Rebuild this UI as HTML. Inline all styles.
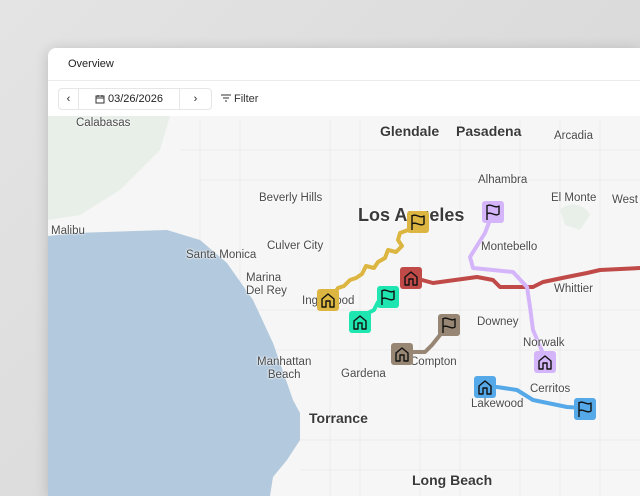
<!DOCTYPE html>
<html><head><meta charset="utf-8"><style>
*{margin:0;padding:0;box-sizing:border-box}
html,body{width:640px;height:496px;overflow:hidden}
body{background:linear-gradient(135deg,#e4e4e4,#d4d4d4);font-family:"Liberation Sans",sans-serif;position:relative}
.win{position:absolute;left:48px;top:48px;width:592px;height:448px;background:#fff;border-radius:8px 0 0 0;box-shadow:0 2px 14px rgba(0,0,0,.18);overflow:hidden}
.hdr{position:absolute;left:0;top:0;right:0;height:33px;border-bottom:1px solid #ececec;font-size:11px;color:#222;padding:10px 0 0 20px}
.tb{position:absolute;left:0;top:33px;right:0;height:35px;background:#fff}
.grp{position:absolute;left:10px;top:7px;width:154px;height:22px;border:1px solid #e6e6e6;border-radius:4px;display:flex;font-size:11px;color:#222}
.grp div{display:flex;align-items:center;justify-content:center}
.map{position:absolute;left:0;top:68px;right:0;bottom:0;background:#f6f6f6}
.l{position:absolute;font-size:11.5px;color:#4a4a4a;white-space:nowrap;text-shadow:0 0 2px #fff,0 0 2px #fff}
.b{font-weight:bold;font-size:14px;color:#3a3a3a}
</style></head><body>
<div class="win">
<div class="hdr">Overview</div>
<div class="tb">
<div class="grp"><div style="width:20px;border-right:1px solid #e6e6e6">‹</div><div style="width:101px;border-right:1px solid #e6e6e6"><svg width="10" height="10" viewBox="0 0 10 10" style="margin-right:3px"><rect x="1" y="2" width="8" height="7" fill="none" stroke="#333"/><path d="M1 4h8M3 1v2M7 1v2" stroke="#333"/></svg>03/26/2026</div><div style="flex:1">›</div></div>
<div style="position:absolute;left:173px;top:12px;font-size:11px;color:#333"><svg width="10" height="8" viewBox="0 0 10 8" style="margin-right:3px"><path d="M0 1h10M2 4h6M4 7h2" stroke="#333"/></svg>Filter</div>
</div>
<div class="map"></div>
</div>
<svg width="640" height="496" style="position:absolute;left:0;top:0">
<defs><clipPath id="c"><rect x="48" y="116" width="592" height="380"/></clipPath></defs>
<g clip-path="url(#c)">
<g stroke="#ececec" stroke-width="1" fill="none">
<path d="M200 120V496M240 120V496M330 120V496M360 120V496M420 120V496M460 120V496M520 120V496M560 120V496M600 120V496M180 150H640M200 180H640M250 310H640M260 350H640M280 440H640M300 470H640"/>
</g>
<path d="M48 116H170L160 150L120 190L80 215L48 220Z" fill="#e8efe8"/>
<path d="M560 210C570 200 585 205 590 215L580 230L565 225Z" fill="#e8efe8"/>
<path d="M48 236L75 233L167 230L200 240L227 263L253 300L273 343L293 400L300 413L300 440L287 460L273 477L270 496H48Z" fill="#b3c9dd"/>
<g fill="none" stroke-width="4" stroke-linecap="round" stroke-linejoin="round">
<path d="M422 280L433 283L477 277L493 280L500 287L533 287L543 282L567 277L587 273L600 270L640 268" stroke="#bf4a48"/>
<path d="M493 212L485 233L470 257L473 268L513 272L527 287L530 307L533 330L545 358" stroke="#d5b5fa"/>
<path d="M485 387L497 387L517 390L533 400L567 407L585 408" stroke="#55a9e8"/>
<path d="M418 222L408 230L400 233L398 240L402 246L396 252L388 250L385 258L378 262L374 268L366 266L362 274L356 278L350 280L344 286L338 288L334 294L328 300" stroke="#dcb640"/>
<path d="M388 297L378 302L374 310L366 314L360 322" stroke="#1fe5b0"/>
<path d="M449 325L440 335L432 345L425 352L415 352L402 353" stroke="#978673"/>
</g>
</g>
</svg>
<div class="l" style="left:76px;top:117px">Calabasas</div>
<div class="l b" style="left:380px;top:123px">Glendale</div>
<div class="l b" style="left:456px;top:123px">Pasadena</div>
<div class="l" style="left:554px;top:130px">Arcadia</div>
<div class="l" style="left:478px;top:174px">Alhambra</div>
<div class="l" style="left:551px;top:192px">El Monte</div>
<div class="l" style="left:612px;top:194px">West</div>
<div class="l" style="left:259px;top:192px">Beverly Hills</div>
<div class="l b" style="left:358px;top:205px;font-size:18px">Los Angeles</div>
<div class="l" style="left:51px;top:225px">Malibu</div>
<div class="l" style="left:267px;top:240px">Culver City</div>
<div class="l" style="left:481px;top:241px">Montebello</div>
<div class="l" style="left:186px;top:249px">Santa Monica</div>
<div class="l" style="left:246px;top:272px;line-height:13px">Marina<br>Del Rey</div>
<div class="l" style="left:554px;top:283px">Whittier</div>
<div class="l" style="left:302px;top:295px">Inglewood</div>
<div class="l" style="left:477px;top:316px">Downey</div>
<div class="l" style="left:523px;top:337px">Norwalk</div>
<div class="l" style="left:257px;top:356px;line-height:13px;text-align:center">Manhattan<br>Beach</div>
<div class="l" style="left:341px;top:368px">Gardena</div>
<div class="l" style="left:410px;top:356px">Compton</div>
<div class="l" style="left:530px;top:383px">Cerritos</div>
<div class="l" style="left:471px;top:398px">Lakewood</div>
<div class="l b" style="left:309px;top:410px">Torrance</div>
<div class="l b" style="left:412px;top:472px">Long Beach</div>
<svg width="640" height="496" style="position:absolute;left:0;top:0">
<defs>
<g id="h"><path d="M-6 7V-1L0-6L6-1V7H2V1H-2V7Z" fill="none" stroke="#111" stroke-width="1.4" stroke-linejoin="round"/></g>
<g id="f"><path d="M-6 8V-7M-6-6C-2-9 2-3 6-6V2C2 5-2-1-6 2" fill="none" stroke="#111" stroke-width="1.4" stroke-linejoin="round"/></g>
</defs>
<g transform="translate(418,222)"><rect x="-11" y="-11" width="22" height="22" rx="3" fill="#dcb640"/><use href="#f"/></g>
<g transform="translate(328,300)"><rect x="-11" y="-11" width="22" height="22" rx="3" fill="#dcb640"/><use href="#h"/></g>
<g transform="translate(411,278)"><rect x="-11" y="-11" width="22" height="22" rx="3" fill="#bf4a48"/><use href="#h"/></g>
<g transform="translate(388,297)"><rect x="-11" y="-11" width="22" height="22" rx="3" fill="#1fe5b0"/><use href="#f"/></g>
<g transform="translate(360,322)"><rect x="-11" y="-11" width="22" height="22" rx="3" fill="#1fe5b0"/><use href="#h"/></g>
<g transform="translate(449,325)"><rect x="-11" y="-11" width="22" height="22" rx="3" fill="#978673"/><use href="#f"/></g>
<g transform="translate(402,354)"><rect x="-11" y="-11" width="22" height="22" rx="3" fill="#978673"/><use href="#h"/></g>
<g transform="translate(493,212)"><rect x="-11" y="-11" width="22" height="22" rx="3" fill="#d5b5fa"/><use href="#f"/></g>
<g transform="translate(545,362)"><rect x="-11" y="-11" width="22" height="22" rx="3" fill="#d5b5fa"/><use href="#h"/></g>
<g transform="translate(485,387)"><rect x="-11" y="-11" width="22" height="22" rx="3" fill="#55a9e8"/><use href="#h"/></g>
<g transform="translate(585,409)"><rect x="-11" y="-11" width="22" height="22" rx="3" fill="#55a9e8"/><use href="#f"/></g>
</svg>
</body></html>
